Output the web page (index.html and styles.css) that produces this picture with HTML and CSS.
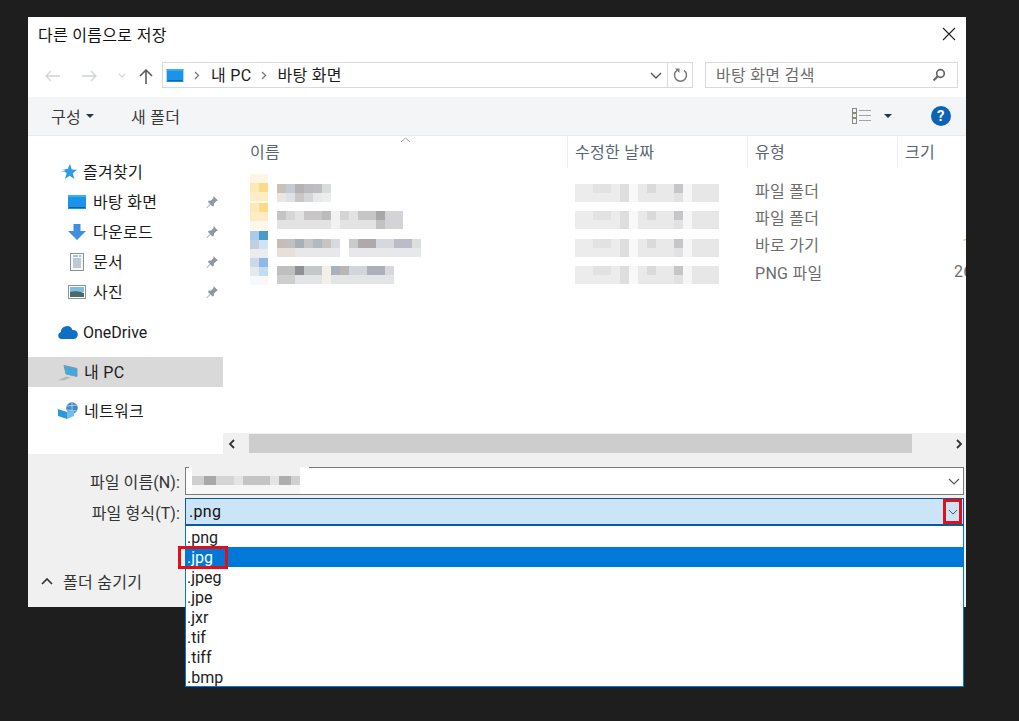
FILE: index.html
```html
<!DOCTYPE html>
<html lang="ko">
<head>
<meta charset="utf-8">
<title>다른 이름으로 저장</title>
<link rel="stylesheet" href="styles.css">
</head>
<body>
<svg class="defs" width="0" height="0">
  <symbol id="i-desktop" viewBox="0 0 18 14"><rect width="18" height="14" fill="#1b93e8"/><rect x="0" y="0" width="18" height="2" fill="#37b0f5"/><rect x="1" y="12" width="16" height="1" fill="#0c5f9e"/></symbol>
  <symbol id="i-pin" viewBox="0 0 14 14"><path d="M8.500 1l4.500 4.500-1.500.5-2.500 2.500-.2 2.500-1.300.5-2-2-3.500 3.500-.5-.5 3.500-3.500-2-2 .5-1.300 2.500-.2 2.500-2.500z" fill="#8f98a3"/></symbol>
  <symbol id="i-date" viewBox="0 0 16 2">
    <rect width="5" height="2" fill="#ececec"/><rect x="5" width="1" height="2" fill="#dedee0"/><rect x="6" width="1" height="2" fill="#f8f8f8"/><rect x="7" width="4" height="2" fill="#e9e9e9"/><rect x="11" width="1" height="1" fill="#c6c6c8"/><rect x="11" y="1" width="1" height="1" fill="#e2e2e2"/><rect x="12" width="1" height="2" fill="#f6f6f6"/><rect x="13" width="3" height="2" fill="#e7e7e7"/><rect x="2" width="2" height="1" fill="#e2e2e2"/><rect x="8" width="1" height="1" fill="#dadada"/>
  </symbol>
</svg>
<div class="dialog">
  <header class="title">
    <span>다른 이름으로 저장</span>
    <svg class="close" width="14" height="14" viewBox="0 0 14 14"><path d="M1 1l12 12M13 1L1 13" stroke="#222" stroke-width="1.100" fill="none"/></svg>
  </header>

  <div class="navbar">
    <svg class="nav-arrow back" width="16" height="12" viewBox="0 0 16 12"><path d="M1 6h14M6 1L1 6l5 5" stroke="#d0d4d8" stroke-width="1.300" fill="none"/></svg>
    <svg class="nav-arrow forward" width="16" height="12" viewBox="0 0 16 12"><path d="M0 6h14M9 1l5 5-5 5" stroke="#d0d4d8" stroke-width="1.300" fill="none"/></svg>
    <svg class="nav-arrow recent" width="8" height="6" viewBox="0 0 8 6"><path d="M1 1l3 3 3-3" stroke="#d0d4d8" stroke-width="1.200" fill="none"/></svg>
    <svg class="nav-arrow up" width="14" height="15" viewBox="0 0 14 15"><path d="M7 15V1M1 7l6-6 6 6" stroke="#5c5c5c" stroke-width="1.600" fill="none"/></svg>
    <div class="address">
      <svg class="addr-icon" width="18" height="13"><use href="#i-desktop"/></svg>
      <svg class="crumb" width="6" height="9" viewBox="0 0 6 9"><path d="M1 1l3.500 3.500L1 8" stroke="#777" stroke-width="1.300" fill="none"/></svg>
      <span class="crumb-text">내 PC</span>
      <svg class="crumb second-crumb" width="6" height="9" viewBox="0 0 6 9"><path d="M1 1l3.500 3.500L1 8" stroke="#777" stroke-width="1.300" fill="none"/></svg>
      <span class="crumb-text last-crumb">바탕 화면</span>
      <svg class="addr-chevron" width="12" height="7" viewBox="0 0 12 7"><path d="M1 1l5 5 5-5" stroke="#555" stroke-width="1.400" fill="none"/></svg>
      <div class="refresh">
        <svg width="15" height="16" viewBox="0 0 15 16"><path d="M4 3.300A6 6 0 1 0 11 3.300" stroke="#777" stroke-width="1.500" fill="none"/><path d="M2 1.500h4.500v4.500z" fill="#777"/></svg>
      </div>
    </div>
    <div class="search">
      <span>바탕 화면 검색</span>
      <svg width="14" height="14" viewBox="0 0 14 14"><circle cx="8.500" cy="5.500" r="3.800" stroke="#666" stroke-width="1.700" fill="none"/><path d="M5.500 8.500L1.500 12.500" stroke="#666" stroke-width="2.200"/></svg>
    </div>
  </div>

  <div class="toolbar">
    <span class="tool">구성</span><i class="caret"></i>
    <span class="tool newfolder">새 폴더</span>
    <svg class="view" width="20" height="16" viewBox="0 0 20 16"><g fill="none" stroke="#8a8a80"><rect x=".5" y=".5" width="4" height="4"/><rect x=".5" y="5.500" width="4" height="4"/><rect x=".5" y="10.500" width="4" height="5"/></g><path d="M7 2.500h12M7 7.500h12M7 12.500h12" stroke="#9ba3ad"/></svg>
    <i class="caret view-caret"></i>
    <span class="help">?</span>
  </div>

  <div class="main">
    <nav class="side">
      <ul class="group">
        <li class="side-item head">
          <svg class="side-ico star" width="18" height="16" viewBox="0 0 18 16"><path d="M11 0l1.800 5.500 5.200.3-4.200 3.500 1.500 5.700-4.600-3.200-4.700 3.200 1.600-5.700-2-1.800h-4l4-1 1-1H2l5-.5h1.600z" fill="#2d9be6"/></svg>
          <span>즐겨찾기</span>
        </li>
        <li class="side-item sub">
          <svg class="side-ico" width="18" height="14"><use href="#i-desktop"/></svg><span>바탕 화면</span>
          <svg class="pin" width="14" height="14"><use href="#i-pin"/></svg>
        </li>
        <li class="side-item sub">
          <svg class="side-ico" width="18" height="16" viewBox="0 0 18 16"><path d="M5.500 0h7v7H18l-9 9-9-9h5.500z" fill="#3f8ee0"/></svg><span>다운로드</span>
          <svg class="pin" width="14" height="14"><use href="#i-pin"/></svg>
        </li>
        <li class="side-item sub">
          <svg class="side-ico" width="18" height="18" viewBox="0 0 18 18"><rect x="2.500" y=".5" width="13" height="17" fill="#f6f8fa" stroke="#8d9299"/><path d="M5 3h5M11 3h2" stroke="#3a9bd5" stroke-width="1.200"/><path d="M5 6h8M5 8h8M5 10h8M5 12h8M5 14h8" stroke="#8d98a5"/></svg><span>문서</span>
          <svg class="pin" width="14" height="14"><use href="#i-pin"/></svg>
        </li>
        <li class="side-item sub">
          <svg class="side-ico" width="18" height="14" viewBox="0 0 18 14"><rect x=".5" y=".5" width="17" height="13" fill="#fff" stroke="#8d9299"/><rect x="2" y="2" width="14" height="5" fill="#7cc0e8"/><path d="M2 7c4-1.500 9-1 14 1v4H2z" fill="#4a6b66"/></svg><span>사진</span>
          <svg class="pin" width="14" height="14"><use href="#i-pin"/></svg>
        </li>
      </ul>
      <ul class="group">
        <li class="side-item head wide">
          <svg class="side-ico" width="20" height="13" viewBox="0 0 20 13"><path d="M3.500 13a3.500 3.500 0 0 1-.6-6.900A6 6 0 0 1 14.500 4 4.500 4.500 0 0 1 16 13z" fill="#0f6fc6"/></svg>
          <span class="latin">OneDrive</span>
        </li>
      </ul>
      <ul class="group">
        <li class="side-item head wide active">
          <svg class="side-ico gap6" width="20" height="17" viewBox="0 0 20 17"><path d="M6 1.500l13 3v8L8 10z" fill="#3fa9e0" stroke="#7d97a8"/><path d="M0 16l8-3.500 5 1-7 3z" fill="#b9b9b9"/></svg>
          <span>내 PC</span>
        </li>
      </ul>
      <ul class="group last">
        <li class="side-item head wide">
          <svg class="side-ico gap6" width="20" height="18" viewBox="0 0 20 18"><circle cx="14" cy="6" r="5.800" fill="#3f88c5"/><path d="M9 4l10-1M9 8l10 1M14 .5v11" stroke="#a9d3ee"/><path d="M0 7l9 3v7l-9-3z" fill="#2c9ad8"/><path d="M9 10l7-2v6l-7 3z" fill="#6fbfe8"/></svg>
          <span>네트워크</span>
        </li>
      </ul>
    </nav>

    <section class="files">
      <div class="cols heads">
        <div class="head-cell first">이름<svg class="sort" width="11" height="6" viewBox="0 0 11 6"><path d="M1 5l4.500-4 4.500 4" stroke="#a5a5a5" fill="none"/></svg></div>
        <div class="head-cell">수정한 날짜</div>
        <div class="head-cell">유형</div>
        <div class="head-cell">크기</div>
      </div>
      <div class="rows">
        <div class="cols row">
          <div class="name-cell">
            <svg class="blur ico-blur" width="18" height="32" viewBox="0 0 2 3.556"><rect width="2" height="1" fill="#fdf6e4"/><rect y="1" width="1" height="1" fill="#fde8b8"/><rect x="1" y="1" width="1" height="1" fill="#fdd98a"/><rect y="2" width="2" height="1" fill="#fdecc6"/><rect y="3" width="2" height=".556" fill="#fef8ea"/></svg>
            <svg class="blur" width="54" height="18" viewBox="0 0 6 2"><rect width="1" height="1" fill="#c9c0b8"/><rect x="1" width="1" height="1" fill="#c5cad6"/><rect x="2" width="1" height="1" fill="#b5b2b2"/><rect x="3" width="1" height="1" fill="#bcbcbf"/><rect x="4" width="1" height="1" fill="#bdbfc1"/><rect x="5" width="1" height="1" fill="#d8dcdc"/><rect y="1" width="1" height="1" fill="#ebe6df"/><rect x="1" y="1" width="1" height="1" fill="#dfe1ea"/><rect x="2" y="1" width="1" height="1" fill="#c9c6c6"/><rect x="3" y="1" width="1" height="1" fill="#d5d6d8"/><rect x="4" y="1" width="1" height="1" fill="#e9e9e9"/><rect x="5" y="1" width="1" height="1" fill="#eceeee"/></svg>
          </div>
          <svg class="blur date" width="144" height="18"><use href="#i-date"/></svg>
          <div class="type">파일 폴더</div>
          <div class="size"></div>
        </div>
        <div class="cols row">
          <div class="name-cell">
            <svg class="blur ico-blur" width="18" height="27" viewBox="0 0 2 3"><rect width="1" height="1" fill="#fde8b8"/><rect x="1" width="1" height="1" fill="#fdd98a"/><rect y="1" width="2" height="1" fill="#fdecc6"/><rect y="2" width="2" height="1" fill="#fef8ea"/></svg>
            <svg class="blur" width="126" height="18" viewBox="0 0 14 2"><rect width="14" height="2" fill="#e3e3e3"/><rect width="1" height="1" fill="#c4c4c4"/><rect x="1" width="1" height="1" fill="#d6d6d6"/><rect x="3" width="2" height="1" fill="#c8c6c6"/><rect x="5" width="1" height="1" fill="#bbb"/><rect x="6" width="1" height="2" fill="#f2f2f2"/><rect x="7" width="1" height="1" fill="#d4d4d4"/><rect x="9" width="2" height="1" fill="#c6c6c6"/><rect x="11" width="1" height="1" fill="#a8a8a8"/><rect x="11" y="1" width="1" height="1" fill="#c2c2c2"/><rect x="12" width="2" height="2" fill="#d4d4d8"/></svg>
          </div>
          <svg class="blur date" width="144" height="18"><use href="#i-date"/></svg>
          <div class="type">파일 폴더</div>
          <div class="size"></div>
        </div>
        <div class="cols row">
          <div class="name-cell">
            <svg class="blur ico-blur" width="18" height="27" viewBox="0 0 2 3"><rect width="1" height="1" fill="#a9cce8"/><rect x="1" width="1" height="1" fill="#4a9cc9"/><rect y="1" width="1" height="1" fill="#c2cfe0"/><rect x="1" y="1" width="1" height="1" fill="#cfe3f2"/><rect y="2" width="2" height="1" fill="#ececef"/></svg>
            <svg class="blur" width="144" height="18" viewBox="0 0 16 2"><rect width="16" height="2" fill="#e8e8ea"/><rect width="1" height="1" fill="#c6bdb8"/><rect x="1" width="1" height="1" fill="#bfbfc4"/><rect x="2" width="1" height="1" fill="#a9afb6"/><rect x="3" width="1" height="1" fill="#c6c6c6"/><rect x="4" width="1" height="1" fill="#b2b8c4"/><rect x="5" width="1" height="1" fill="#c8c4c2"/><rect x="6" width="1" height="1" fill="#d8dae0"/><rect x="7" width="1" height="2" fill="#fff"/><rect x="8" width="1" height="1" fill="#c9cbcb"/><rect x="9" width="2" height="1" fill="#aeaaab"/><rect x="11" width="2" height="1" fill="#d6d8e0"/><rect x="13" width="2" height="1" fill="#bcbcc8"/><rect x="15" width="1" height="1" fill="#dcdfe0"/><rect y="1" width="2" height="1" fill="#e9dfda"/></svg>
          </div>
          <svg class="blur date" width="144" height="18"><use href="#i-date"/></svg>
          <div class="type">바로 가기</div>
          <div class="size short">1</div>
        </div>
        <div class="cols row">
          <div class="name-cell">
            <svg class="blur ico-blur" width="18" height="27" viewBox="0 0 2 3"><rect width="1" height="1" fill="#cdd8ea"/><rect x="1" width="1" height="1" fill="#8db9e6"/><rect y="1" width="1" height="1" fill="#e4e9ee"/><rect x="1" y="1" width="1" height="1" fill="#c4dcf2"/><rect y="2" width="2" height="1" fill="#f6f8fa"/></svg>
            <svg class="blur" width="117" height="18" viewBox="0 0 13 2"><rect width="13" height="2" fill="#e2e4e6"/><rect width="2" height="1" fill="#bfbfbf"/><rect x="2" width="1" height="1" fill="#8e9094"/><rect x="3" width="2" height="1" fill="#c4c8c8"/><rect x="5" width="1" height="2" fill="#f2f0ea"/><rect x="6" width="1" height="1" fill="#aab0bc"/><rect x="7" width="1" height="1" fill="#b9b6b6"/><rect x="8" width="2" height="1" fill="#d2d6da"/><rect x="10" width="2" height="1" fill="#adb0b8"/><rect x="12" width="1" height="1" fill="#d6d8dc"/><rect y="1" width="2" height="1" fill="#cecece"/></svg>
          </div>
          <svg class="blur date" width="144" height="18"><use href="#i-date"/></svg>
          <div class="type">PNG 파일</div>
          <div class="size">26,112 KB</div>
        </div>
      </div>
      <div class="hscroll">
        <svg class="sc-arrow" width="8" height="10" viewBox="0 0 8 10"><path d="M6 1L2 5l4 4" stroke="#333" stroke-width="1.800" fill="none"/></svg>
        <div class="thumb"></div>
        <svg class="sc-arrow" width="8" height="10" viewBox="0 0 8 10"><path d="M2 1l4 4-4 4" stroke="#333" stroke-width="1.800" fill="none"/></svg>
      </div>
    </section>
  </div>

  <div class="bottom">
    <div class="field">
      <label>파일 이름(N):</label>
      <div class="input">
        <svg class="blur input-blur" width="120" height="27" viewBox="0 0 40 9"><rect y="0" width="40" height="9" fill="#fff"/><rect x="1" width="36" height="3" fill="#f0f0f0"/><rect x="1" y="3" width="36" height="3" fill="#e4e4e4"/><rect x="1" y="3" width="8" height="3" fill="#cfcfcf"/><rect x="5" y="3" width="4" height="3" fill="#a8a8a8"/><rect x="9" y="3" width="6" height="3" fill="#d4d4d4"/><rect x="18" y="3" width="9" height="3" fill="#c4c4c4"/><rect x="30" y="3" width="4" height="3" fill="#aeaeae"/><rect x="34" y="3" width="3" height="3" fill="#d0d0d0"/><rect x="1" y="6" width="36" height="3" fill="#f6f6f6"/></svg>
        <svg class="chev" width="12" height="7" viewBox="0 0 12 7"><path d="M1 1l5 5 5-5" stroke="#555" stroke-width="1.100" fill="none"/></svg>
      </div>
    </div>
    <div class="field second">
      <label>파일 형식(T):</label>
      <div class="combo">
        <span>.png</span>
        <div class="mark-arrow"><svg width="10" height="6" viewBox="0 0 12 7"><path d="M1 1l5 5 5-5" stroke="#555" stroke-width="1.200" fill="none"/></svg></div>
        <ul class="menu">
          <li>.png</li>
          <li class="selected">.jpg<b class="mark"></b></li>
          <li>.jpeg</li>
          <li>.jpe</li>
          <li>.jxr</li>
          <li>.tif</li>
          <li>.tiff</li>
          <li>.bmp</li>
        </ul>
      </div>
    </div>
    <div class="hide">
      <svg width="12" height="7" viewBox="0 0 12 7"><path d="M1 6l5-5 5 5" stroke="#333" stroke-width="1.700" fill="none"/></svg>
      <span>폴더 숨기기</span>
    </div>
  </div>
</div>
</body>
</html>
```
FILE: styles.css
```css
* { box-sizing: border-box; }
html, body { margin: 0; height: 100%; }
body {
  background: #1e1e1e;
  padding: 17px 53px 0 28px;
  font-family: Roboto, "Noto Sans CJK KR", sans-serif;
  font-size: 16px;
  letter-spacing: .3px;
  color: #1c1c1c;
  overflow: hidden;
}
ul { list-style: none; margin: 0; padding: 0; }
.defs { position: absolute; }
.dialog { width: 938px; height: 590px; background: #fff; display: flex; flex-direction: column; }

.title { height: 33px; flex: none; display: flex; align-items: center; justify-content: space-between; padding: 1px 10px 0 10px; color: #111; }

.navbar { height: 47px; flex: none; display: flex; align-items: flex-start; padding: 12px 8px 0 17px; }
.nav-arrow { flex: none; margin-top: 8px; }
.forward { margin-left: 21px; }
.recent { margin-left: 20px; margin-top: 11px; }
.up { margin-left: 13px; margin-top: 7px; }
.address { margin-left: 9px; width: 531px; height: 26px; border: 1px solid #d9d9d9; display: flex; align-items: center; padding-left: 3px; color: #1c1c1c; }
.crumb { margin-left: 11px; flex: none; }
.addr-icon + .crumb { margin-left: 10px; }
.second-crumb { margin-left: 10px; }
.crumb-text { margin-left: 11px; white-space: nowrap; padding-bottom: 2px; }
.last-crumb { margin-left: 10px; }
.addr-chevron { margin-left: auto; margin-right: 5px; }
.refresh { width: 25px; height: 24px; border-left: 1px solid #d9d9d9; display: flex; align-items: center; justify-content: center; }
.search { margin-left: 12px; width: 253px; height: 26px; border: 1px solid #d9d9d9; display: flex; align-items: center; justify-content: space-between; padding: 0 11px 0 10px; color: #6d6d6d; }
.search span { padding-bottom: 2px; }

.toolbar { height: 39px; flex: none; background: #f3f5f7; border-bottom: 1px solid #e8eaec; display: flex; align-items: center; padding-left: 23px; color: #3a3a3a; }
.tool { white-space: nowrap; }
.caret { width: 0; height: 0; border: 4px solid transparent; border-top-color: #1f3552; border-bottom: 0; margin-left: 5px; }
.newfolder { margin-left: 37px; }
.view { margin-left: auto; }
.view-caret { margin-left: 12px; }
.help { margin-left: 39px; margin-right: 15px; width: 20px; height: 20px; border-radius: 50%; background: #0a63b5; color: #fff; font-weight: 700; font-size: 15px; line-height: 20px; text-align: center; }

.main { height: 318px; flex: none; display: flex; }
.side { width: 195px; flex: none; padding-top: 21px; }
.group { margin-bottom: 10px; }
.group.last { margin-top: -1px; }
.side-item { height: 30px; display: flex; align-items: center; position: relative; white-space: nowrap; }
.side-item span { padding-bottom: 2px; }
.side-item .latin { padding-bottom: 0; letter-spacing: 0; }
.head { padding-left: 32px; }
.head.wide { padding-left: 30px; }
.head .side-ico { margin-right: 5px; }
.head .star { margin-left: -1px; margin-right: 6px; }
.head .gap6 { margin-right: 6px; }
.sub { padding-left: 40px; }
.sub .side-ico { margin-right: 7px; }
.side-ico { flex: none; }
.active { background: #d9d9d9; }
.pin { margin-left: auto; margin-right: 4px; }

.files { flex: 1; min-width: 0; display: flex; flex-direction: column; overflow: hidden; }
.cols { display: grid; grid-template-columns: 345px 180px 150px 68px; }
.heads { height: 32px; color: #5a6674; }
.head-cell { height: 32px; padding: 6px 0 0 7px; border-right: 1px solid #eceef0; line-height: 22px; white-space: nowrap; }
.head-cell:last-child { border-right: 0; }
.head-cell.first { padding-left: 27px; position: relative; }
.sort { position: absolute; left: 177px; top: 1px; }
.rows { flex: 1; padding-top: 8px; }
.row { height: 27.300px; align-items: center; }
.name-cell { padding-left: 27px; display: flex; align-items: center; gap: 9px; height: 18px; margin-top: 7px; }
.ico-blur { margin-top: -7px; }
.blur { flex: none; filter: blur(.6px); }
.date { margin: 7px 0 0 7px; }
.type { padding-left: 7px; color: #6d6d6d; white-space: nowrap; }
.size { padding-left: 56px; color: #6d6d6d; white-space: nowrap; overflow: hidden; }
.size.short { padding-left: 64px; color: #d8c9a8; }

.hscroll { height: 21px; flex: none; background: #f0f0f0; display: flex; align-items: center; padding: 0 3px 0 5px; }
.sc-arrow { flex: none; }
.thumb { width: 663px; height: 19px; margin: 0 43px 0 13px; background: #cdcdcd; }

.bottom { flex: 1; background: #f0f0f0; padding-top: 13px; position: relative; }
.field { display: flex; align-items: center; }
.second { margin-top: 3px; }
.field label { width: 152px; margin-right: 5px; text-align: right; color: #333; white-space: nowrap; letter-spacing: .1px; }
.input { width: 779px; height: 28px; background: #fff; border: 1px solid #7a7a7a; display: flex; align-items: center; justify-content: space-between; padding-right: 3px; }
.input-blur { margin-top: -1px; margin-left: 3px; }
.combo { width: 779px; height: 28px; background: #cce4f7; border: 1px solid #0a5a9e; border-bottom-width: 2px; display: flex; align-items: center; justify-content: space-between; padding-left: 3px; position: relative; color: #111; }
.mark-arrow { width: 19px; height: 25px; border: 3px solid #e0101a; display: flex; align-items: center; justify-content: center; margin-right: 1px; }
.menu { position: absolute; left: -1px; right: -1px; top: 27px; height: 161px; background: #fff; border: 1px solid #0078d7; border-top: 0; padding-top: 1px; z-index: 2; letter-spacing: 0; }
.menu li { height: 20px; line-height: 22px; padding-left: 1px; position: relative; color: #222; }
.menu .selected { background: #0078d7; color: #fff; }
.mark { position: absolute; left: -8px; top: -1px; width: 50px; height: 23px; border: 3px solid #e0101a; }
.hide { margin-top: 42px; height: 26px; display: flex; align-items: center; padding-left: 13px; gap: 10px; color: #333; }
```
